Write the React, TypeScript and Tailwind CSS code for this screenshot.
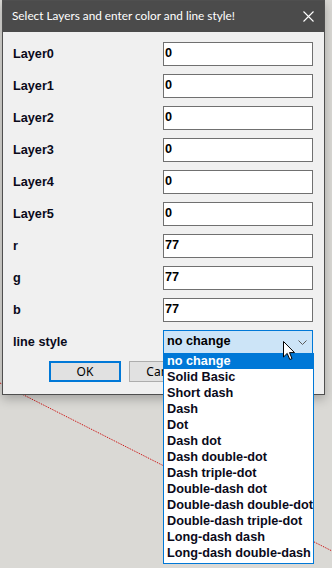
import React from "react";

const rows: [string, string][] = [
  ["Layer0", "0"],
  ["Layer1", "0"],
  ["Layer2", "0"],
  ["Layer3", "0"],
  ["Layer4", "0"],
  ["Layer5", "0"],
  ["r", "77"],
  ["g", "77"],
  ["b", "77"],
];

const options = [
  "no change",
  "Solid Basic",
  "Short dash",
  "Dash",
  "Dot",
  "Dash dot",
  "Dash double-dot",
  "Dash triple-dot",
  "Double-dash dot",
  "Double-dash double-dot",
  "Double-dash triple-dot",
  "Long-dash dash",
  "Long-dash double-dash",
];

export default function App() {
  return (
    <div className="relative w-[332px] h-[568px] overflow-hidden bg-[#dad9d5] font-['Liberation_Sans',Arial,sans-serif]">
      <svg className="absolute inset-0" width="332" height="568">
        <line x1="0" y1="383" x2="332" y2="551" stroke="#cc0000" strokeWidth="1" strokeDasharray="1 1" />
        <rect x="28" y="0" width="1" height="2" fill="#22aa22" />
      </svg>

      <div className="absolute left-[2px] top-0 w-[323px] h-[395px] border border-[#4f4f4f] bg-[#f0f0f0] flex flex-col shadow-[0_4px_10px_rgba(0,0,0,0.25)]">
        <div className="h-[31px] bg-[#4b4b4b] flex items-center justify-between pl-[9px] pr-[10px] shrink-0">
          <span className="text-[11.8px] text-white font-['Lato',sans-serif] leading-none pb-[1px]">
            Select Layers and enter color and line style!
          </span>
          <svg width="11" height="11" viewBox="0 0 11 11">
            <path d="M0.5 0.5 L10.5 10.5 M10.5 0.5 L0.5 10.5" stroke="#ffffff" strokeWidth="1.1" />
          </svg>
        </div>

        <div className="flex flex-col gap-[8px] pt-[10px] pl-[10px]">
          {rows.map(([label, value]) => (
            <div key={label} className="flex items-center h-[24px]">
              <div className="w-[150px] text-[12.7px] font-bold text-[#0a0a1a] pt-[2px]">{label}</div>
              <div className="w-[150px] h-[24px] border border-[#707070] bg-white flex items-start pl-[1px] pt-[3px] text-[12.7px] font-bold text-black leading-[15px]">
                {value}
              </div>
            </div>
          ))}
          <div className="flex items-center h-[24px]">
            <div className="w-[150px] text-[12.7px] font-bold text-[#0a0a1a] pt-[2px]">line style</div>
            <div className="w-[150px] h-[24px] border border-[#0078d7] bg-[#cce4f7] flex items-center justify-between pl-[3px] pr-[5px] text-[12.7px] font-bold text-black">
              <span>no change</span>
              <svg width="9" height="5" viewBox="0 0 9 5">
                <path d="M0.5 0.5 L4.5 4.5 L8.5 0.5" stroke="#5a5a5a" strokeWidth="1" fill="none" />
              </svg>
            </div>
          </div>
        </div>

        <div className="flex gap-[8px] mt-[7px] ml-[46px]">
          <div className="w-[72px] h-[21px] border-2 border-[#0078d7] bg-[#e1e1e1] flex items-center justify-center text-[12px] text-black font-['Noto_Sans',sans-serif]">
            OK
          </div>
          <div className="w-[72px] h-[21px] border border-[#adadad] bg-[#e1e1e1] flex items-center justify-center text-[12px] text-black font-['Noto_Sans',sans-serif]">
            Cancel
          </div>
        </div>
      </div>

      <div className="absolute left-[163px] top-[353px] w-[151px] h-[211px] border border-[#0078d7] border-t-0 bg-white flex flex-col">
        {options.map((o, i) => (
          <div
            key={o}
            className={
              i === 0
                ? "h-[16px] bg-[#0078d7] text-white pl-[3px] text-[12.7px] font-bold leading-[16px] whitespace-nowrap overflow-hidden"
                : "h-[16px] text-[#0a0a1a] pl-[3px] text-[12.7px] font-bold leading-[16px] whitespace-nowrap overflow-hidden"
            }
          >
            {o}
          </div>
        ))}
      </div>

      <svg className="absolute left-[283px] top-[341px]" width="13" height="20" viewBox="0 0 13 20">
        <path d="M0.5 0.5 L0.5 16 L4.2 12.4 L6.8 18.5 L9 17.6 L6.5 11.6 L11.5 11.6 Z" fill="#ffffff" stroke="#000000" strokeWidth="1" strokeLinejoin="miter" />
      </svg>
    </div>
  );
}
